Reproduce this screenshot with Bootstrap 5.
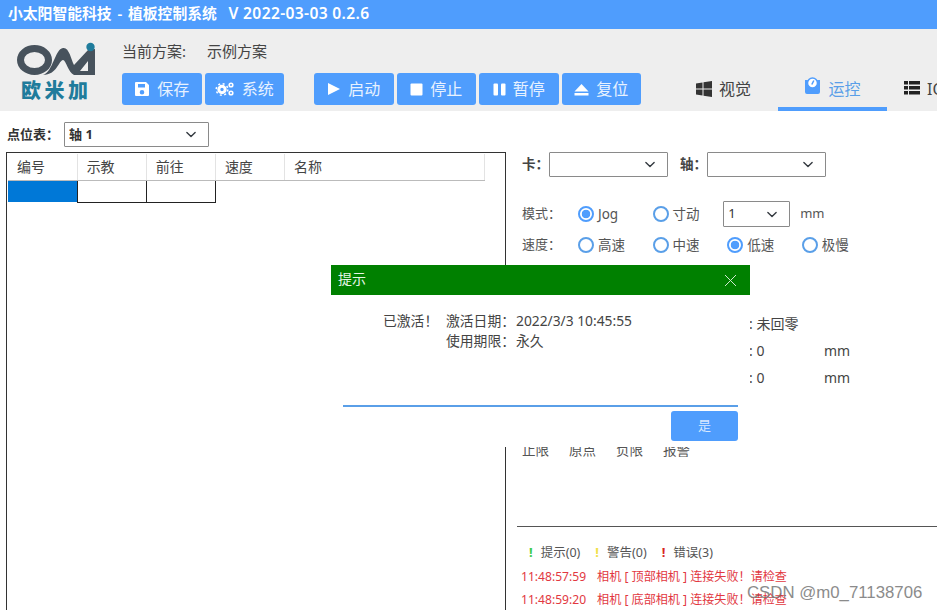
<!DOCTYPE html>
<html lang="zh-CN">
<head>
  <meta charset="UTF-8">
  <meta name="viewport" content="width=device-width, initial-scale=1.0">
  <title>植板控制系统</title>
  <link href="https://cdn.jsdelivr.net/npm/bootstrap@5.3.0/dist/css/bootstrap.min.css" rel="stylesheet">
  <style>
    html, body { height: 100%; overflow: hidden; }
    body { font-family: "Noto Sans", "Noto Sans CJK SC", sans-serif; font-size: 13px; color: #444; background: #fff; position: relative; }
    .title-bar { height: 29px; background: #4f9dfd; color: #fff; font-size: 14.8px; font-weight: 600; padding-left: 8px; line-height: 27px; white-space: pre; word-spacing: 2px; }
    .title-ver { font-size: 15.6px; letter-spacing: .35px; word-spacing: 0; }
    .top-head { height: 82px; background: #eee; }
    .logo-box { width: 122px; flex-shrink: 0; padding: 13px 0 0 16px; }
    .logo-name { font-family: "Noto Sans CJK SC", sans-serif; font-size: 20px; font-weight: 900; color: #1f7c9c; letter-spacing: 3.5px; line-height: 20px; margin: -1px 0 0 5px; white-space: nowrap; }
    .plan-line { font-size: 15px; line-height: 20px; margin-top: 12px; margin-bottom: 12px; color: #444; }
    .plan-line span { margin-left: 21px; }
    .tool-row { gap: 3px; }
    .tool-btn { width: 79.5px; height: 32px; background: #4f9dfd; color: #e8f2ff; border: 0; border-radius: 3px; font-size: 16px; padding: 0; gap: 7px; flex-shrink: 0; }
    .tool-btn:hover { background: #4f9dfd; color: #e8f2ff; }
    .tool-gap { margin-left: 27px; }
    .head-tabs { margin-left: 28px; height: 82px; flex-wrap: nowrap; }
    .head-tab { width: 109px; height: 82px; padding-top: 48px; border-bottom: 4px solid transparent; font-size: 16px; color: #444; gap: 7px; flex-shrink: 0; }
    .head-tab.on { color: #5a9fe8; border-bottom-color: #4f9dfd; }
    .head-tab.io-tab { padding-left: 17px; }
    .work-area { height: 499px; }
    .left-side { width: 506px; flex-shrink: 0; padding: 11px 0 0 7px; }
    .pick-label { font-weight: 700; font-size: 13px; color: #333; white-space: nowrap; }
    .pick { border: 1px solid #8a8a8a; border-radius: 1px; height: 25px; font-size: 13px; padding: 0 24px 0 4px; background-position: right 10px center; background-size: 14px 11px; color: #333; box-shadow: none; }
    .pick-axis { width: 145px; font-weight: 700; margin-left: 5px; }
    .point-box { border: 1px solid #333; border-bottom: 0; margin: 5px 0 0 -1px; height: 458px; padding: 1px; }
    .point-table { width: 477px; table-layout: fixed; margin: 0; color: #444; }
    .point-table th { height: 26px; padding: 0 0 0 9px; font-weight: 400; font-size: 14px; vertical-align: middle; border-right: 1px solid #e3e3e3; border-bottom: 1px solid #bbb; background: #fff; box-shadow: none; }
    .point-table td { height: 22px; padding: 0; border: 0; box-shadow: none; }
    .point-table td.cell-on { background: #0078d7; }
    .point-table td.cell-in { border: 1px solid #222; background: #fff; }
    .right-side { flex: 1; padding: 41px 0 0 16px; min-width: 0; }
    .mini-label { width: 27px; font-weight: 700; color: #444; font-size: 13.5px; white-space: nowrap; }
    .mini-gap { margin-left: 12px; }
    .pick-io { width: 119px; }
    .set-line { height: 26px; color: #555; }
    .set-name { width: 56px; }
    .radio-item { width: 74.6px; margin: 0; padding: 0; gap: 4px; min-height: 0; white-space: nowrap; font-size: 13.5px; }
    .radio-item .form-check-input { float: none; margin: 0; width: 16px; height: 16px; border: 2px solid #5a9fe8; flex-shrink: 0; }
    .radio-item .form-check-input:checked { background-color: #fff; border-color: #4f9dfd; background-image: radial-gradient(circle, #4f9dfd 0 4px, #fff 4.6px); }
    .pick-step { width: 67px; height: 26px; margin-left: -4px; }
    .mm-unit { margin-left: 10px; }
    .state-lines { margin: 52px 0 0 227px; }
    .state-line { height: 27px; font-size: 14px; }
    .state-line b { font-weight: 400; width: 75px; }
    .limit-line { margin-top: 49px; gap: 20px; font-size: 13.5px; color: #555; }
    .log-rule { margin: 66px 0 0 -5px; border: 0; border-top: 1px solid #555; opacity: 1; }
    .log-tabs { margin-top: 16px; gap: 15px; padding-left: 7px; font-size: 12.5px; height: 20px; color: #555; }
    .log-tabs i { font-style: normal; font-weight: 700; font-size: 13px; margin-right: 8px; }
    .mark-ok { color: #3ecb4a; }
    .mark-warn { color: #f0e04a; }
    .mark-err { color: #d8261f; }
    .log-row { color: #e2383f; font-size: 12.1px; height: 23px; white-space: nowrap; margin-left: -1px; }
    .log-row span { margin-right: 11px; }
    .log-first { margin-top: 5px; }
    .dialog-box { position: absolute; left: 331px; top: 265px; width: 419px; height: 182px; border: 0; border-radius: 0; background: #fff; }
    .dialog-head { height: 30px; flex: none; background: #008000; color: #e6f5e6; padding: 0 13px 0 7px; border: 0; border-radius: 0; font-size: 14px; }
    .dialog-head span { margin-top: -3px; }
    .dialog-body { flex: none; padding: 16px 0 0 52px; height: 110px; font-size: 13.8px; color: #444; line-height: 20px; }
    .dialog-body .tip-ok { width: 63px; white-space: nowrap; }
    .dialog-body .tip-key { width: 70px; white-space: nowrap; }
    .dialog-foot { margin: 0 12px; border-top: 2px solid #5a9fe8; padding-top: 4px; }
    .yes-btn { width: 67px; height: 30px; background: #4f9dfd; color: #d9e9ff; border: 0; border-radius: 3px; font-size: 13px; padding: 0; }
    .yes-btn:hover { background: #4f9dfd; color: #d9e9ff; }
    .water-mark { position: absolute; left: 747px; top: 580px; font-family: "Liberation Sans", sans-serif; font-size: 16.8px; color: #777; opacity: .85; white-space: nowrap; }
  </style>
</head>
<body>
  <div class="title-bar">小太阳智能科技 - 植板控制系统  <span class="title-ver">V 2022-03-03 0.2.6</span></div>

  <div class="top-head d-flex overflow-hidden">
    <div class="logo-box">
      <svg width="80" height="39" viewBox="0 0 80 39">
        <ellipse cx="18.500" cy="18" rx="14" ry="11.500" fill="none" stroke="#47525c" stroke-width="7"/>
        <path fill-rule="evenodd" d="M27 33C37 30 39 7 47 6C53 5 55 17 58 23L72 8L79 7V33H58C52 30 50 18 47 18C43 18 41 33 27 33ZM72 19L64 29H72Z" fill="#47525c"/>
        <circle cx="74.500" cy="5" r="4.200" fill="#1f7c9c"/>
      </svg>
      <div class="logo-name">欧米加</div>
    </div>
    <div class="flex-shrink-0">
      <div class="plan-line">当前方案:<span>示例方案</span></div>
      <div class="d-flex tool-row">
        <button class="btn tool-btn d-flex align-items-center justify-content-center" type="button">
          <svg width="16" height="16" viewBox="0 0 16 16" fill="#fff"><path d="M2 1h10l3 3v10a1 1 0 0 1-1 1H2a1 1 0 0 1-1-1V2a1 1 0 0 1 1-1zm2 2v3.500h7V3zm4 6a2.300 2.300 0 1 0 0 4.600A2.300 2.300 0 0 0 8 9z"/></svg>
          保存
        </button>
        <button class="btn tool-btn d-flex align-items-center justify-content-center" type="button">
          <svg width="20" height="16" viewBox="0 0 20 16" fill="none" stroke="#fff"><circle cx="7" cy="8.500" r="3.200" stroke-width="3"/><circle cx="7" cy="8.500" r="5.800" stroke-width="1.500" stroke-dasharray="2 2.550"/><circle cx="16" cy="4" r="1.800" stroke-width="1.600"/><circle cx="16" cy="12" r="1.800" stroke-width="1.600"/></svg>
          系统
        </button>
        <button class="btn tool-btn tool-gap d-flex align-items-center justify-content-center" type="button">
          <svg width="14" height="14" viewBox="0 0 14 14" fill="#fff"><path d="M1 1l12 6-12 6z"/></svg>
          启动
        </button>
        <button class="btn tool-btn d-flex align-items-center justify-content-center" type="button">
          <svg width="13" height="13" viewBox="0 0 13 13" fill="#fff"><rect x="0.500" y="0.500" width="12" height="12" rx="1"/></svg>
          停止
        </button>
        <button class="btn tool-btn d-flex align-items-center justify-content-center" type="button">
          <svg width="13" height="13" viewBox="0 0 13 13" fill="#fff"><rect x="0.500" y="0.500" width="4.500" height="12" rx="1"/><rect x="8" y="0.500" width="4.500" height="12" rx="1"/></svg>
          暂停
        </button>
        <button class="btn tool-btn d-flex align-items-center justify-content-center" type="button">
          <svg width="15" height="13" viewBox="0 0 15 13" fill="#fff"><path d="M7.500 1l7 7.500H.5z"/><rect x="0.500" y="10" width="14" height="2.500"/></svg>
          复位
        </button>
      </div>
    </div>
    <div class="head-tabs d-flex">
      <div class="head-tab d-flex justify-content-center">
        <svg class="mt-1" width="16" height="16" viewBox="0 0 16 16" fill="#333"><path d="M0 2.500l6.500-1V7.500H0zM7.500 1.300L16 0v7.500H7.500zM0 8.500h6.500v6L0 13.500zM7.500 8.500H16V16l-8.500-1.300z"/></svg>
        视觉
      </div>
      <div class="head-tab on d-flex justify-content-center">
        <svg width="17" height="18" viewBox="0 0 17 18"><path d="M1 3h2.500a6 6 0 0 0 10 0H16v12a2 2 0 0 1-2 2H3a2 2 0 0 1-2-2z" fill="#4f9dfd"/><circle cx="8.500" cy="6" r="5" fill="#fff" stroke="#4f9dfd" stroke-width="1.500"/><path d="M9.800 3.500L7.800 7.500" stroke="#4f9dfd" stroke-width="1.500"/></svg>
        运控
      </div>
      <div class="head-tab io-tab d-flex">
        <svg class="mt-1" width="16" height="14" viewBox="0 0 16 14" fill="#222"><rect width="4" height="3.500"/><rect x="5" width="11" height="3.500"/><rect y="5" width="4" height="3.500"/><rect x="5" y="5" width="11" height="3.500"/><rect y="10" width="4" height="3.500"/><rect x="5" y="10" width="11" height="3.500"/></svg>
        IO
      </div>
    </div>
  </div>

  <div class="work-area d-flex">
    <div class="left-side">
      <div class="d-flex align-items-center">
        <span class="pick-label">点位表：</span>
        <select class="form-select pick pick-axis"><option>轴 1</option></select>
      </div>
      <div class="point-box">
        <table class="table point-table">
          <thead>
            <tr><th>编号</th><th>示教</th><th>前往</th><th>速度</th><th style="width:200px">名称</th></tr>
          </thead>
          <tbody>
            <tr><td class="cell-on"></td><td class="cell-in"></td><td class="cell-in"></td><td></td><td></td></tr>
          </tbody>
        </table>
      </div>
    </div>

    <div class="right-side">
      <div class="d-flex align-items-center">
        <span class="mini-label">卡：</span>
        <select class="form-select pick pick-io"></select>
        <span class="mini-label mini-gap">轴：</span>
        <select class="form-select pick pick-io"></select>
      </div>

      <div class="set-line d-flex align-items-center" style="margin-top:24px">
        <span class="set-name">模式：</span>
        <label class="form-check radio-item d-flex align-items-center"><input class="form-check-input" type="radio" name="mode" checked>Jog</label>
        <label class="form-check radio-item d-flex align-items-center"><input class="form-check-input" type="radio" name="mode">寸动</label>
        <select class="form-select pick pick-step"><option>1</option></select>
        <span class="mm-unit">mm</span>
      </div>
      <div class="set-line d-flex align-items-center" style="margin-top:5px">
        <span class="set-name">速度：</span>
        <label class="form-check radio-item d-flex align-items-center"><input class="form-check-input" type="radio" name="speed">高速</label>
        <label class="form-check radio-item d-flex align-items-center"><input class="form-check-input" type="radio" name="speed">中速</label>
        <label class="form-check radio-item d-flex align-items-center"><input class="form-check-input" type="radio" name="speed" checked>低速</label>
        <label class="form-check radio-item d-flex align-items-center"><input class="form-check-input" type="radio" name="speed">极慢</label>
      </div>

      <div class="state-lines">
        <div class="state-line d-flex align-items-center"><b>: 未回零</b></div>
        <div class="state-line d-flex align-items-center"><b>: 0</b><span>mm</span></div>
        <div class="state-line d-flex align-items-center"><b>: 0</b><span>mm</span></div>
      </div>

      <div class="limit-line d-flex">
        <span>止限</span><span>原点</span><span>负限</span><span>报警</span>
      </div>

      <hr class="log-rule">
      <div class="log-tabs d-flex align-items-center">
        <span><i class="mark-ok">!</i>提示(0)</span>
        <span><i class="mark-warn">!</i>警告(0)</span>
        <span><i class="mark-err">!</i>错误(3)</span>
      </div>
      <div class="log-row log-first"><span>11:48:57:59</span>相机 [ 顶部相机 ] 连接失败！请检查</div>
      <div class="log-row"><span>11:48:59:20</span>相机 [ 底部相机 ] 连接失败！请检查</div>
    </div>
  </div>

  <div class="modal-content dialog-box">
    <div class="modal-header dialog-head">
      <span>提示</span>
      <svg class="ms-auto" width="13" height="13" viewBox="0 0 13 13" stroke="#cfe8cf" fill="none"><path d="M1 1l11 11M12 1L1 12"/></svg>
    </div>
    <div class="modal-body dialog-body">
      <div class="d-flex">
        <span class="tip-ok">已激活！</span>
        <div>
          <div class="d-flex"><span class="tip-key">激活日期：</span>2022/3/3 10:45:55</div>
          <div class="d-flex"><span class="tip-key">使用期限：</span>永久</div>
        </div>
      </div>
    </div>
    <div class="dialog-foot d-flex justify-content-end">
      <button class="btn yes-btn" type="button">是</button>
    </div>
  </div>

  <div class="water-mark">CSDN @m0_71138706</div>

  <script src="https://cdn.jsdelivr.net/npm/bootstrap@5.3.0/dist/js/bootstrap.bundle.min.js"></script>
</body>
</html>
